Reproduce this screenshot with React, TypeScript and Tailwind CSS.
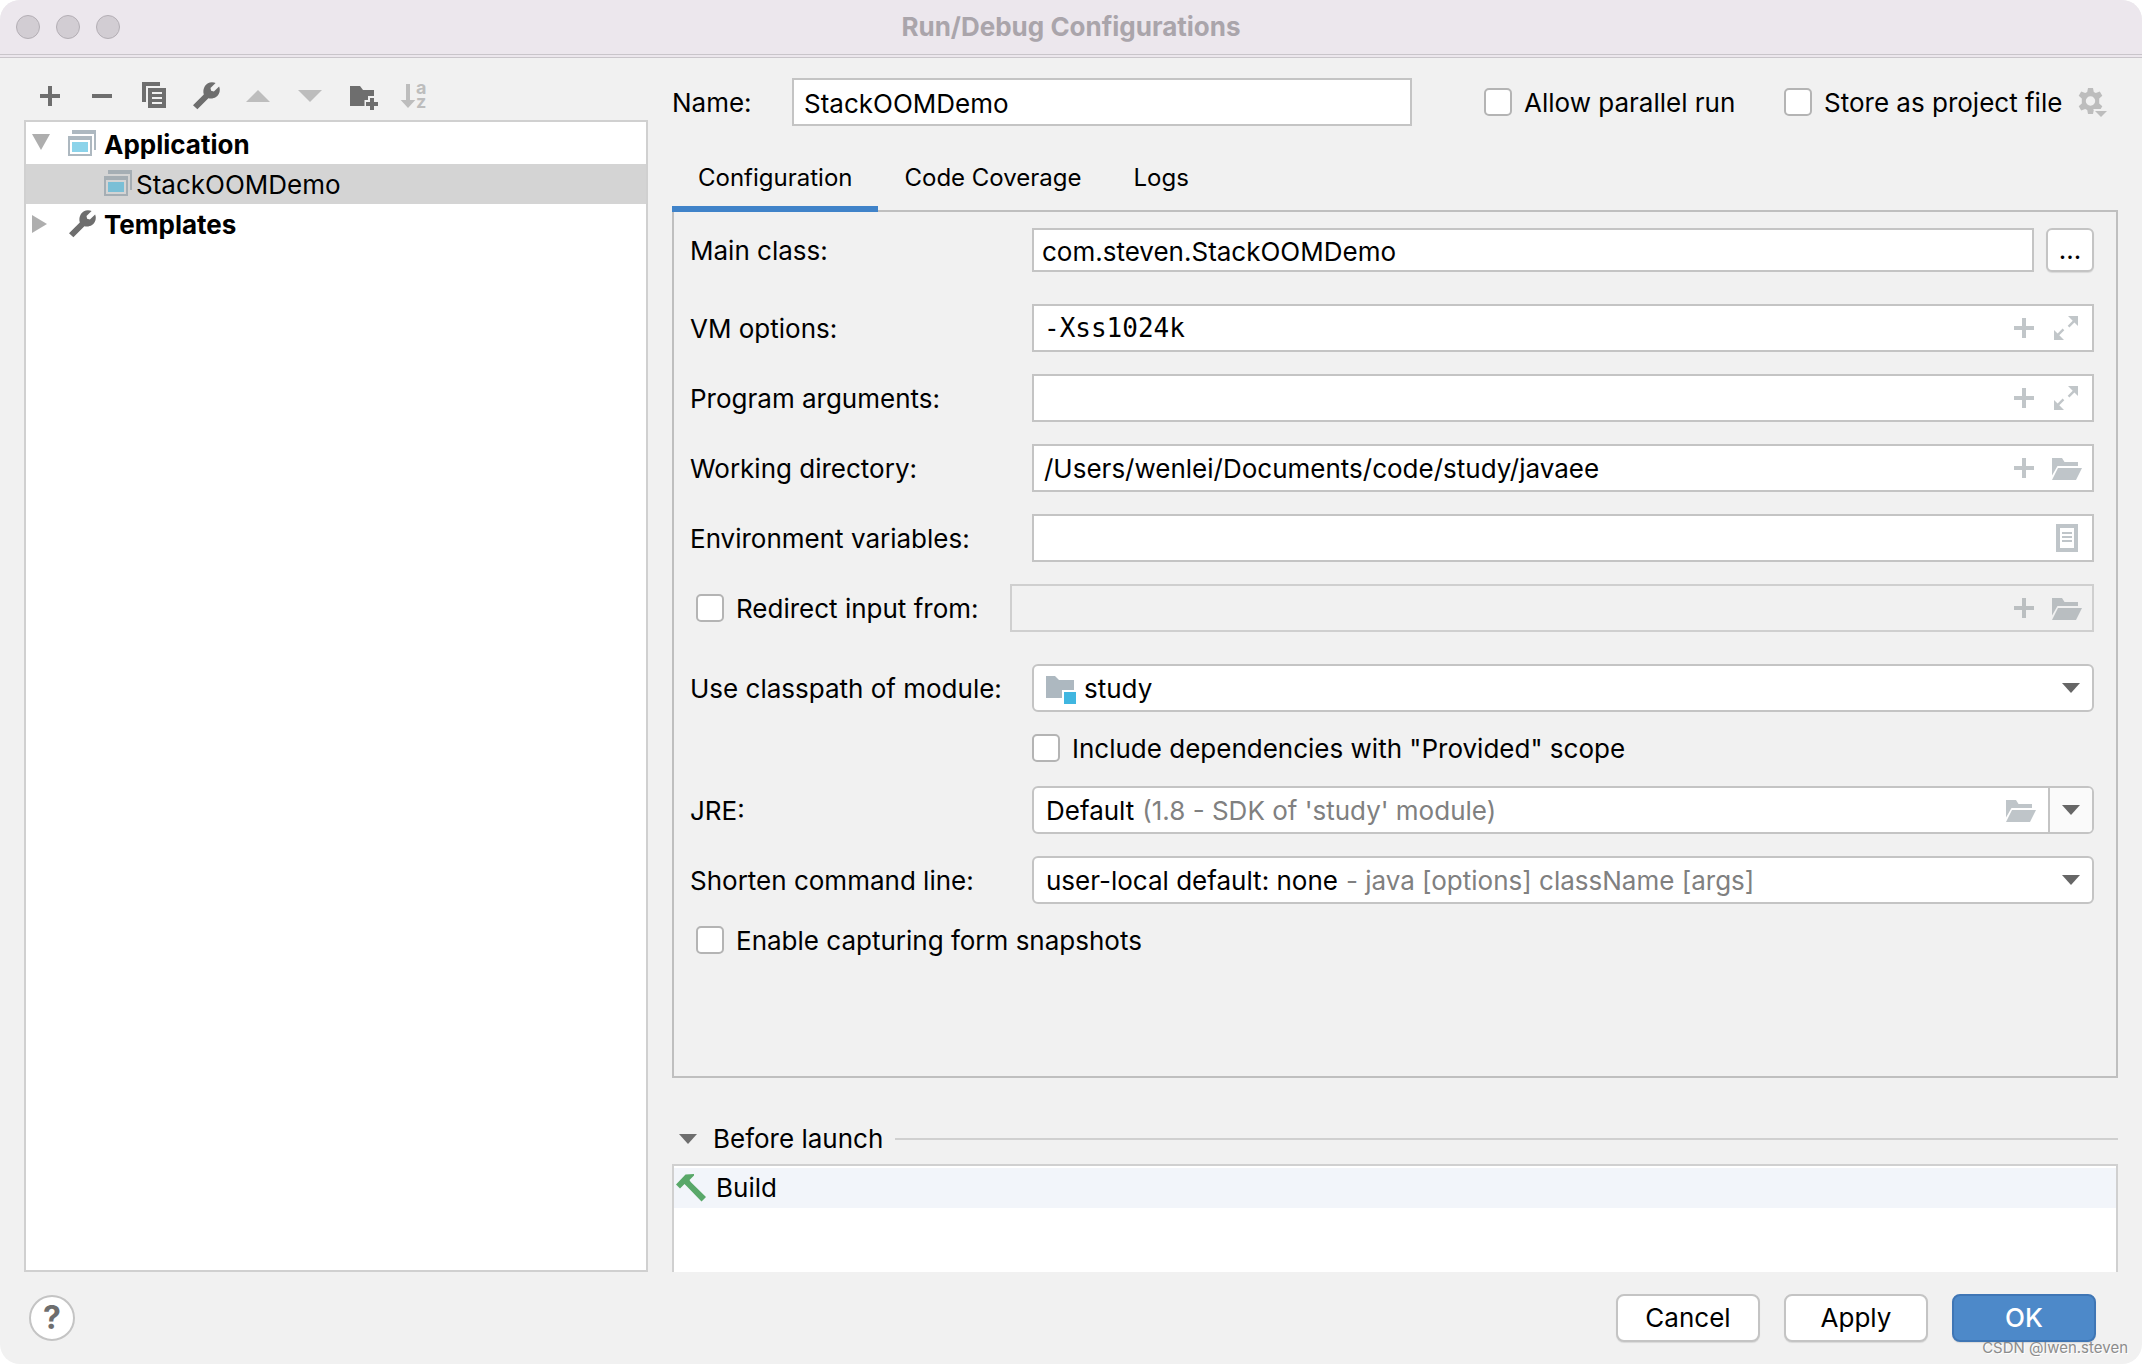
import type { ReactNode } from "react"

type IconProps = {
  className?: string
}

function PlusIcon({ className = "text-[#6e6e6e]" }: IconProps) {
  return (
    <svg viewBox="0 0 32 32" className={`size-8 flex-none ${className}`} fill="currentColor" aria-hidden="true">
      <path d="M14 6h4v8h8v4h-8v8h-4v-8H6v-4h8z" />
    </svg>
  )
}

function MinusIcon() {
  return (
    <svg viewBox="0 0 32 32" className="size-8 flex-none text-[#6e6e6e]" fill="currentColor" aria-hidden="true">
      <path d="M6 14h20v4H6z" />
    </svg>
  )
}

function CopyIcon() {
  return (
    <svg viewBox="0 0 32 32" className="size-8 flex-none text-[#6e6e6e]" fill="currentColor" aria-hidden="true">
      <path d="M4 2h18v4H8v16H4z" />
      <path fillRule="evenodd" d="M10 8h18v20H10zM14 12v2h10v-2zM14 17v2h10v-2zM14 22v2h10v-2z" />
    </svg>
  )
}

function WrenchIcon() {
  return (
    <svg viewBox="0 0 32 32" className="size-8 flex-none text-[#6e6e6e]" fill="currentColor" aria-hidden="true">
      <path d="M3 25.3 13.8 14.6C12 8.300 16 2.300 22 2.200c1.400 0 2.700.3 3.600.8L20.500 8l.6 2.700 2.800.8 5.200-5c.9 1.800.9 4.200.2 6.300-1.600 4.400-6.300 6.700-10.900 5.400L7.400 29.300z" />
    </svg>
  )
}

function MoveUpIcon() {
  return (
    <svg viewBox="0 0 32 32" className="size-8 flex-none text-[#bdbdbd]" fill="currentColor" aria-hidden="true">
      <path d="M4 22h24L16 10z" />
    </svg>
  )
}

function MoveDownIcon() {
  return (
    <svg viewBox="0 0 32 32" className="size-8 flex-none text-[#bdbdbd]" fill="currentColor" aria-hidden="true">
      <path d="M4 10h24L16 22z" />
    </svg>
  )
}

function NewFolderIcon() {
  return (
    <svg viewBox="0 0 32 32" className="size-8 flex-none text-[#6e6e6e]" fill="currentColor" aria-hidden="true">
      <path d="M4 6h10l3 4h11v6h-6v4h-3.500v6H4z" />
      <path d="M24 18h4v4h4v4h-4v4h-4v-4h-4v-4h4z" />
    </svg>
  )
}

function SortIcon() {
  return (
    <svg
      viewBox="0 0 32 32"
      className="size-8 flex-none overflow-visible text-[#bdbdbd]"
      fill="currentColor"
      aria-hidden="true"
    >
      <path d="M8 4h4v16h5.300L10 28l-7.300-8H8z" />
      <text x="18" y="14" className="font-[Inter] text-[18px] font-bold">a</text>
      <text x="18" y="28" className="font-[Inter] text-[18px] font-bold">z</text>
    </svg>
  )
}

function ApplicationIcon({ selected = false }: { selected?: boolean }) {
  const frame = selected ? "#a5aeb4" : "#adb8c0"
  return (
    <svg viewBox="0 0 32 32" className="size-8 flex-none" aria-hidden="true">
      <path fill={frame} d="M6 2h24v20h-2V6H6z" />
      <path fill={frame} fillRule="evenodd" d="M2 8h24v20H2zM4 12v14h20V12z" />
      <path fill={selected ? "#7abfd6" : "#8bd3ea"} d="M6 14h16v10H6z" />
    </svg>
  )
}

function TreeArrow({ open }: { open: boolean }) {
  return (
    <svg viewBox="0 0 20 20" className="mr-4 size-5 flex-none text-[#aeaeae]" fill="currentColor" aria-hidden="true">
      {open ? <path d="M2 0h18l-9 16z" /> : <path d="M2 1v18l15-9z" />}
    </svg>
  )
}

function ExpandIcon() {
  return (
    <svg viewBox="0 0 32 32" className="size-8 flex-none text-[#c1c6c9]" fill="currentColor" aria-hidden="true">
      <path d="M18 4h10v10l-3.600-3.600-5 5-1.700-1.700 5-5z" />
      <path d="M4 18l3.600 3.600 5-5 1.700 1.700-5 5L14 28H4z" />
    </svg>
  )
}

function FolderIcon({ className = "text-[#bfc5c9]" }: IconProps) {
  return (
    <svg viewBox="0 0 32 32" className={`size-8 flex-none ${className}`} fill="currentColor" aria-hidden="true">
      <path d="M2 6h10l2.500 4H28v4H7.500L2 23.500z" />
      <path d="M8 16h24l-6 12H2z" />
    </svg>
  )
}

function ListIcon() {
  return (
    <svg viewBox="0 0 32 32" className="size-8 flex-none text-[#bfc5c9]" fill="currentColor" aria-hidden="true">
      <path fillRule="evenodd" d="M6 2h22v28H6zM10 6v20h14V6z" />
      <path d="M12 10h10v2H12zM12 14h10v2H12zM12 18h10v2H12z" />
    </svg>
  )
}

function ModuleIcon() {
  return (
    <svg viewBox="0 0 32 32" className="mr-[6px] size-8 flex-none" aria-hidden="true">
      <path fill="#adb8c0" d="M2 4h9l4 4h15v10H18v8H2z" />
      <path fill="#40b6e0" d="M20 20h12v12H20z" />
    </svg>
  )
}

function CaretIcon({ className = "text-[#666666]" }: IconProps) {
  return (
    <svg viewBox="0 0 18 10" className={`h-[10px] w-[18px] flex-none ${className}`} fill="currentColor" aria-hidden="true">
      <path d="M0 0h18l-9 10z" />
    </svg>
  )
}

function GearIcon() {
  return (
    <svg viewBox="0 0 32 32" className="size-8 flex-none text-[#bdbdbd]" fill="currentColor" aria-hidden="true">
      <g transform="translate(14.500 15)">
        <path
          fillRule="evenodd"
          d="M-2.500-13h5l.8 4 2 1 4-1.600 2.500 4.400-3.100 2.600v5.200l3.100 2.600-2.500 4.400-4-1.600-2 1-.8 4h-5l-.8-4-2-1-4 1.600-2.500-4.400 3.100-2.600v-5.200l-3.100-2.600 2.500-4.400 4 1.600 2-1zM0-4.700a4.700 4.700 0 1 0 0 9.400a4.700 4.700 0 1 0 0-9.400z"
        />
      </g>
      <path d="M17 23h16v8H24z" className="text-[#f1f1f1]" />
      <path d="M19 25h12l-6 6z" />
    </svg>
  )
}

function HammerIcon() {
  return (
    <svg viewBox="0 0 32 32" className="size-8 flex-none text-[#59a869]" fill="currentColor" aria-hidden="true">
      <path d="M0 12.500 9.500 2.500 18 2v1.500L13.500 8l1.200 2L30 25l-4.500 4.500L11 14.500 8.500 12 4 16.500z" />
    </svg>
  )
}

const toolbar = [
  { label: "Add", icon: <PlusIcon /> },
  { label: "Remove", icon: <MinusIcon /> },
  { label: "Copy", icon: <CopyIcon /> },
  { label: "Edit templates", icon: <WrenchIcon /> },
  { label: "Move up", icon: <MoveUpIcon /> },
  { label: "Move down", icon: <MoveDownIcon /> },
  { label: "New folder", icon: <NewFolderIcon /> },
  { label: "Sort", icon: <SortIcon /> },
]

function Checkbox({ id, label }: { id: string; label: string }) {
  return (
    <div className="flex h-7 items-center gap-3">
      <input
        id={id}
        type="checkbox"
        className="size-7 flex-none appearance-none rounded-[5px] border-2 border-[#b4b4b4] bg-white"
      />
      <label htmlFor={id} className="pt-[2px] whitespace-nowrap">
        {label}
      </label>
    </div>
  )
}

function FormRow({ id, label, children }: { id: string; label: string; children: ReactNode }) {
  return (
    <div className="flex items-center">
      <label htmlFor={id} className="w-[342px] flex-none pt-[2px] whitespace-nowrap">
        {label}
      </label>
      {children}
    </div>
  )
}

type TextFieldProps = {
  id: string
  value?: string
  mono?: boolean
  disabled?: boolean
  children?: ReactNode
}

function TextField({ id, value = "", mono = false, disabled = false, children }: TextFieldProps) {
  return (
    <div
      className={`flex h-12 min-w-0 flex-1 items-center gap-[10px] border-2 px-[10px] ${
        disabled ? "border-[#cfcfcf]" : "border-[#c4c4c4] bg-white"
      }`}
    >
      <input
        id={id}
        type="text"
        defaultValue={value}
        disabled={disabled}
        className={`min-w-0 flex-1 bg-transparent outline-none ${mono ? "font-['DejaVu_Sans_Mono',monospace]" : "pt-[2px]"}`}
      />
      {children}
    </div>
  )
}

type SelectFieldProps = {
  id: string
  value: string
  hint?: string
  icon?: ReactNode
  children: ReactNode
}

function SelectField({ id, value, hint, icon, children }: SelectFieldProps) {
  return (
    <div className="flex h-12 min-w-0 flex-1 items-center overflow-hidden rounded-md border-2 border-[#c4c4c4] bg-white pl-[10px]">
      {icon}
      <select id={id} className="appearance-none bg-transparent pt-[2px] pl-[2px] outline-none [field-sizing:content]">
        <option>{value}</option>
      </select>
      {hint && <span className="ml-2 pt-[2px] whitespace-nowrap text-[#808080]">{hint}</span>}
      <div className="flex-1" />
      {children}
    </div>
  )
}

const tabs = ["Configuration", "Code Coverage", "Logs"]

const buttonBase = "h-12 w-36 rounded-lg border-2 shadow-[0_1px_1px_rgba(0,0,0,0.1)]"

export default function App() {
  return (
    <div className="bg-white font-[Inter,sans-serif] text-[26px] leading-8 text-black">
      <div className="relative flex min-h-screen flex-col overflow-hidden rounded-[20px] bg-[#f1f1f1]">
        <header className="grid h-[58px] flex-none grid-cols-[1fr_auto_1fr] items-center border-b-4 border-double border-[#c9c5ca] bg-[#ece7ed]">
          <div className="flex gap-4 pl-4">
            <button type="button" aria-label="Close" className="size-6 rounded-full border border-[#b3aeb4] bg-[#d2cdd3]" />
            <button type="button" aria-label="Minimize" className="size-6 rounded-full border border-[#b3aeb4] bg-[#d2cdd3]" />
            <button type="button" aria-label="Zoom" className="size-6 rounded-full border border-[#b3aeb4] bg-[#d2cdd3]" />
          </div>
          <h1 className="font-bold text-[#aaa5ab]">Run/Debug Configurations</h1>
        </header>

        <main className="flex flex-1 gap-6 px-6">
          <aside className="flex w-[624px] flex-none flex-col">
            <div className="flex h-[62px] items-end gap-5 pb-2 pl-[10px]">
              {toolbar.map((t) => (
                <button key={t.label} type="button" aria-label={t.label} className="size-8">
                  {t.icon}
                </button>
              ))}
            </div>
            <ul className="flex-1 border-2 border-[#d0d0d0] bg-white py-[2px]">
              <li className="flex h-10 items-center gap-[6px] pl-1">
                <div className="flex items-center">
                  <TreeArrow open />
                  <ApplicationIcon />
                </div>
                <span className="pt-[2px] font-bold">Application</span>
              </li>
              <li className="flex h-10 items-center gap-[2px] bg-[#d4d4d4] pl-[76px]">
                <ApplicationIcon selected />
                <span className="pt-[2px]">StackOOMDemo</span>
              </li>
              <li className="flex h-10 items-center gap-[6px] pl-1">
                <div className="flex items-center">
                  <TreeArrow open={false} />
                  <WrenchIcon />
                </div>
                <span className="pt-[2px] font-bold">Templates</span>
              </li>
            </ul>
          </aside>

          <section className="flex min-w-0 flex-1 flex-col">
            <div className="mt-5 flex h-12 items-center">
              <label htmlFor="name" className="w-[120px] flex-none pt-[2px]">
                Name:
              </label>
              <input
                id="name"
                type="text"
                defaultValue="StackOOMDemo"
                className="h-12 min-w-0 flex-1 border-2 border-[#c4c4c4] bg-white px-[10px] pt-[2px] outline-none"
              />
              <div className="ml-[72px] flex items-center">
                <div className="w-[300px]">
                  <Checkbox id="parallel" label="Allow parallel run" />
                </div>
                <div className="w-[292px]">
                  <Checkbox id="store" label="Store as project file" />
                </div>
                <button type="button" aria-label="Storage settings" className="mr-[10px] size-8">
                  <GearIcon />
                </button>
              </div>
            </div>

            <div role="tablist" className="mt-5 flex h-[66px] flex-none text-2xl">
              {tabs.map((tab, i) => (
                <button
                  key={tab}
                  type="button"
                  role="tab"
                  aria-selected={i === 0}
                  className={`z-10 h-[66px] border-b-[6px] px-[26px] pt-1 ${
                    i === 0 ? "border-[#4083c9]" : "border-transparent"
                  }`}
                >
                  {tab}
                </button>
              ))}
            </div>

            <div className="-mt-[2px] flex-1 border-2 border-[#bfbfbf] pt-4 pr-[22px] pl-4">
              <div className="flex flex-col gap-[22px]">
                <div className="mb-[10px] flex items-center">
                  <label htmlFor="main-class" className="w-[342px] flex-none pt-[2px]">
                    Main class:
                  </label>
                  <input
                    id="main-class"
                    type="text"
                    defaultValue="com.steven.StackOOMDemo"
                    className="mr-3 h-11 min-w-0 flex-1 border-2 border-[#c4c4c4] bg-white px-2 pt-[2px] outline-none"
                  />
                  <button
                    type="button"
                    aria-label="Browse"
                    className="h-11 w-12 rounded-md border-2 border-[#c4c4c4] bg-white shadow-[0_1px_1px_rgba(0,0,0,0.1)]"
                  >
                    ...
                  </button>
                </div>
                <FormRow id="vm-options" label="VM options:">
                  <TextField id="vm-options" value="-Xss1024k" mono>
                    <PlusIcon className="text-[#c1c6c9]" />
                    <ExpandIcon />
                  </TextField>
                </FormRow>
                <FormRow id="arguments" label="Program arguments:">
                  <TextField id="arguments">
                    <PlusIcon className="text-[#c1c6c9]" />
                    <ExpandIcon />
                  </TextField>
                </FormRow>
                <FormRow id="directory" label="Working directory:">
                  <TextField id="directory" value="/Users/wenlei/Documents/code/study/javaee">
                    <PlusIcon className="text-[#c1c6c9]" />
                    <FolderIcon />
                  </TextField>
                </FormRow>
                <FormRow id="environment" label="Environment variables:">
                  <TextField id="environment">
                    <ListIcon />
                  </TextField>
                </FormRow>
                <div className="mb-[10px] flex items-center">
                  <div className="w-[320px] flex-none pl-[6px]">
                    <Checkbox id="redirect" label="Redirect input from:" />
                  </div>
                  <TextField id="redirect-path" disabled>
                    <PlusIcon className="text-[#bbbfc1]" />
                    <FolderIcon className="text-[#b9bec1]" />
                  </TextField>
                </div>
                <FormRow id="module" label="Use classpath of module:">
                  <SelectField id="module" value="study" icon={<ModuleIcon />}>
                    <CaretIcon className="mr-3 text-[#666666]" />
                  </SelectField>
                </FormRow>
                <div className="mb-[2px] pl-[342px]">
                  <Checkbox id="provided" label={'Include dependencies with "Provided" scope'} />
                </div>
                <FormRow id="jre" label="JRE:">
                  <SelectField id="jre" value="Default" hint="(1.8 - SDK of 'study' module)">
                    <FolderIcon />
                    <div className="ml-3 flex h-full w-11 items-center justify-end border-l-2 border-[#c4c4c4] bg-[#fafafa] pr-3">
                      <CaretIcon />
                    </div>
                  </SelectField>
                </FormRow>
                <FormRow id="shorten" label="Shorten command line:">
                  <SelectField id="shorten" value="user-local default: none" hint="- java [options] className [args]">
                    <CaretIcon className="mr-3 text-[#666666]" />
                  </SelectField>
                </FormRow>
                <div className="pl-[6px]">
                  <Checkbox id="snapshots" label="Enable capturing form snapshots" />
                </div>
              </div>
            </div>

            <div className="mt-11 mb-2 flex h-[34px] items-center pl-[7px]">
              <CaretIcon className="text-[#6e6e6e]" />
              <h2 className="ml-4">Before launch</h2>
              <div className="ml-3 h-[2px] flex-1 bg-[#d0d0d0]" />
            </div>
            <ul className="h-[108px] flex-none border-2 border-b-0 border-[#d0d0d0] bg-white pt-[2px]">
              <li className="flex h-10 items-center gap-2 bg-[#f2f5fa] pl-[2px]">
                <HammerIcon />
                Build
              </li>
            </ul>
          </section>
        </main>

        <footer className="flex h-[92px] flex-none items-center pr-[46px] pl-[29px]">
          <button
            type="button"
            aria-label="Help"
            className="size-[46px] rounded-full border-2 border-[#c4c4c4] bg-white text-[32px] font-bold text-[#6e6e6e]"
          >
            ?
          </button>
          <div className="ml-auto flex gap-6">
            <button type="button" className={`${buttonBase} border-[#c4c4c4] bg-white`}>
              Cancel
            </button>
            <button type="button" className={`${buttonBase} border-[#c4c4c4] bg-white`}>
              Apply
            </button>
            <button type="button" className={`${buttonBase} border-[#3f76b5] bg-[#4d89c9] font-medium text-white`}>
              OK
            </button>
          </div>
        </footer>

        <span className="absolute right-[14px] bottom-1 text-[15px] leading-6 text-[#8c8c8c] [text-shadow:1px_1px_0_#ffffff]">
          CSDN @lwen.steven
        </span>
      </div>
    </div>
  )
}
